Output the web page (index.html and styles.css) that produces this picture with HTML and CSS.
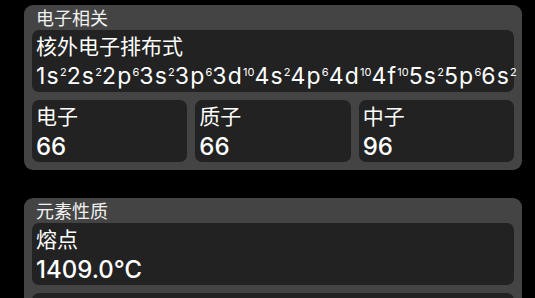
FILE: index.html
```html
<!DOCTYPE html>
<html lang="zh">
<head>
<meta charset="utf-8">
<link rel="stylesheet" href="styles.css">
</head>
<body>
<div class="page">
  <section class="card">
    <div class="card-title">电子相关</div>
    <div class="box">
      <div class="label">核外电子排布式</div>
      <div class="config">1s<sup>2</sup>2s<sup>2</sup>2p<sup>6</sup>3s<sup>2</sup>3p<sup>6</sup>3d<sup>10</sup>4s<sup>2</sup>4p<sup>6</sup>4d<sup>10</sup>4f<sup>10</sup>5s<sup>2</sup>5p<sup>6</sup>6s<sup>2</sup></div>
    </div>
    <div class="row">
      <div class="box">
        <div class="label">电子</div>
        <div class="value">66</div>
      </div>
      <div class="box">
        <div class="label">质子</div>
        <div class="value">66</div>
      </div>
      <div class="box">
        <div class="label">中子</div>
        <div class="value">96</div>
      </div>
    </div>
  </section>
  <section class="card">
    <div class="card-title">元素性质</div>
    <div class="box">
      <div class="label">熔点</div>
      <div class="value">1409.0℃</div>
    </div>
    <div class="box box-next"></div>
  </section>
</div>
</body>
</html>
```

FILE: styles.css
```css
html, body {
  margin: 0;
  padding: 0;
  background: #000;
  overflow: hidden;
}
body {
  font-family: "Inter", "Noto Sans CJK SC", sans-serif;
  color: #fff;
}
.page {
  padding: 5px 13px 0 24px;
  display: flex;
  flex-direction: column;
  gap: 28px;
}
.card {
  background: #444;
  border-radius: 9px;
  padding: 0 8px 8px;
  display: flex;
  flex-direction: column;
  gap: 8px;
}
.card-title {
  font-family: "Noto Sans CJK SC", sans-serif;
  font-size: 18px;
  line-height: 17px;
  height: 17px;
  padding: 4px 0 4px 4px;
  margin-bottom: -8px;
  color: #f2f2f2;
}
.box {
  background: #222;
  border-radius: 7px;
  padding: 0 4px;
}
.box-next {
  height: 63px;
}
.label {
  font-family: "Noto Sans CJK SC", sans-serif;
  font-size: 21px;
  line-height: 31px;
}
.config {
  font-size: 23px;
  line-height: 31px;
  white-space: nowrap;
  letter-spacing: 1.2px;
}
.config sup {
  font-size: 11px;
  line-height: 0;
  vertical-align: 8.5px;
  letter-spacing: 0;
}
.value {
  font-size: 24px;
  line-height: 31px;
  font-weight: 500;
}
.row {
  display: grid;
  grid-template-columns: 1fr 1fr 1fr;
  gap: 8px;
}
```
